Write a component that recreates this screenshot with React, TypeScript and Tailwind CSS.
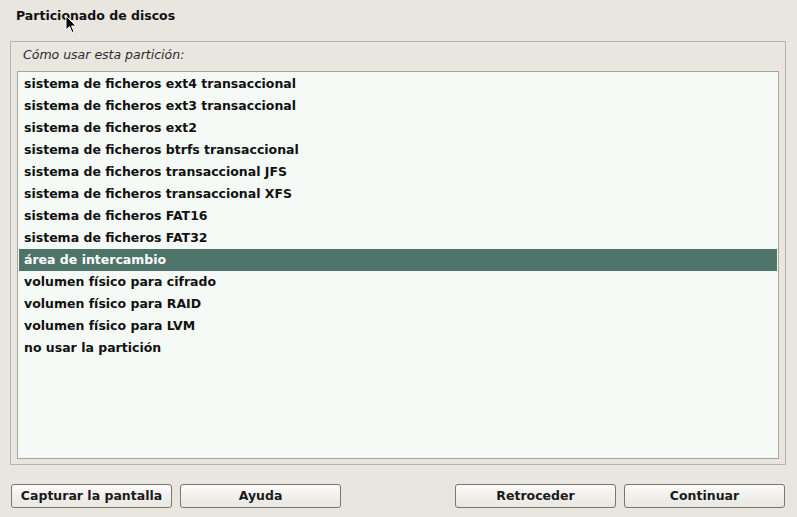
import React from 'react';

const opciones = [
  'sistema de ficheros ext4 transaccional',
  'sistema de ficheros ext3 transaccional',
  'sistema de ficheros ext2',
  'sistema de ficheros btrfs transaccional',
  'sistema de ficheros transaccional JFS',
  'sistema de ficheros transaccional XFS',
  'sistema de ficheros FAT16',
  'sistema de ficheros FAT32',
  'área de intercambio',
  'volumen físico para cifrado',
  'volumen físico para RAID',
  'volumen físico para LVM',
  'no usar la partición',
];

const SELECCIONADO = 8;

function Boton({ children }: { children: React.ReactNode }) {
  return (
    <button className="w-[161px] h-[24px] rounded-[3px] border border-[#7a766c] bg-gradient-to-b from-[#fbfaf8] to-[#e8e6e0] text-[12.5px] font-bold text-[#1a1a1a] leading-none">
      {children}
    </button>
  );
}

export default function App() {
  return (
    <div
      className="relative w-[797px] h-[517px] bg-[#e8e6df] flex flex-col overflow-hidden"
      style={{ fontFamily: '"DejaVu Sans", sans-serif' }}
    >
      {/* cabecera */}
      <div className="h-[41px] pl-[16px] pt-[7px] text-[12.5px] font-bold text-[#111]">
        Particionado de discos
      </div>

      {/* marco principal */}
      <div className="ml-[10px] w-[776px] h-[424px] border border-[#b7b3a7] flex flex-col px-[6px] pb-[5px]">
        <div className="h-[29px] pl-[6px] pt-[4px] text-[12.5px] italic text-[#2a2a2a]">
          Cómo usar esta partición:
        </div>
        <div className="flex-1 border border-[#a9a699] bg-[#f5faf6] pt-[1px] px-[1px]">
          {opciones.map((o, i) => (
            <div
              key={o}
              className={
                i === SELECCIONADO
                  ? 'h-[22px] flex items-center pl-[5px] text-[12.5px] font-bold bg-[#4e7469] text-white'
                  : 'h-[22px] flex items-center pl-[5px] text-[12.5px] font-bold text-[#111]'
              }
            >
              {o}
            </div>
          ))}
        </div>
      </div>

      {/* botones */}
      <div className="mt-[19px] flex px-[11px]">
        <div className="flex gap-[8px]">
          <Boton>Capturar la pantalla</Boton>
          <Boton>Ayuda</Boton>
        </div>
        <div className="ml-auto flex gap-[8px] pr-[1px]">
          <Boton>Retroceder</Boton>
          <Boton>Continuar</Boton>
        </div>
      </div>

      {/* puntero del ratón */}
      <svg className="absolute left-[65px] top-[15px]" width="12" height="19" viewBox="0 0 12 19">
        <path d="M1 1 L1 15 L4.5 11.5 L7 17.5 L9 16.6 L6.6 11 L11 11 Z" fill="#000" stroke="#fff" strokeWidth="1" />
      </svg>
    </div>
  );
}
